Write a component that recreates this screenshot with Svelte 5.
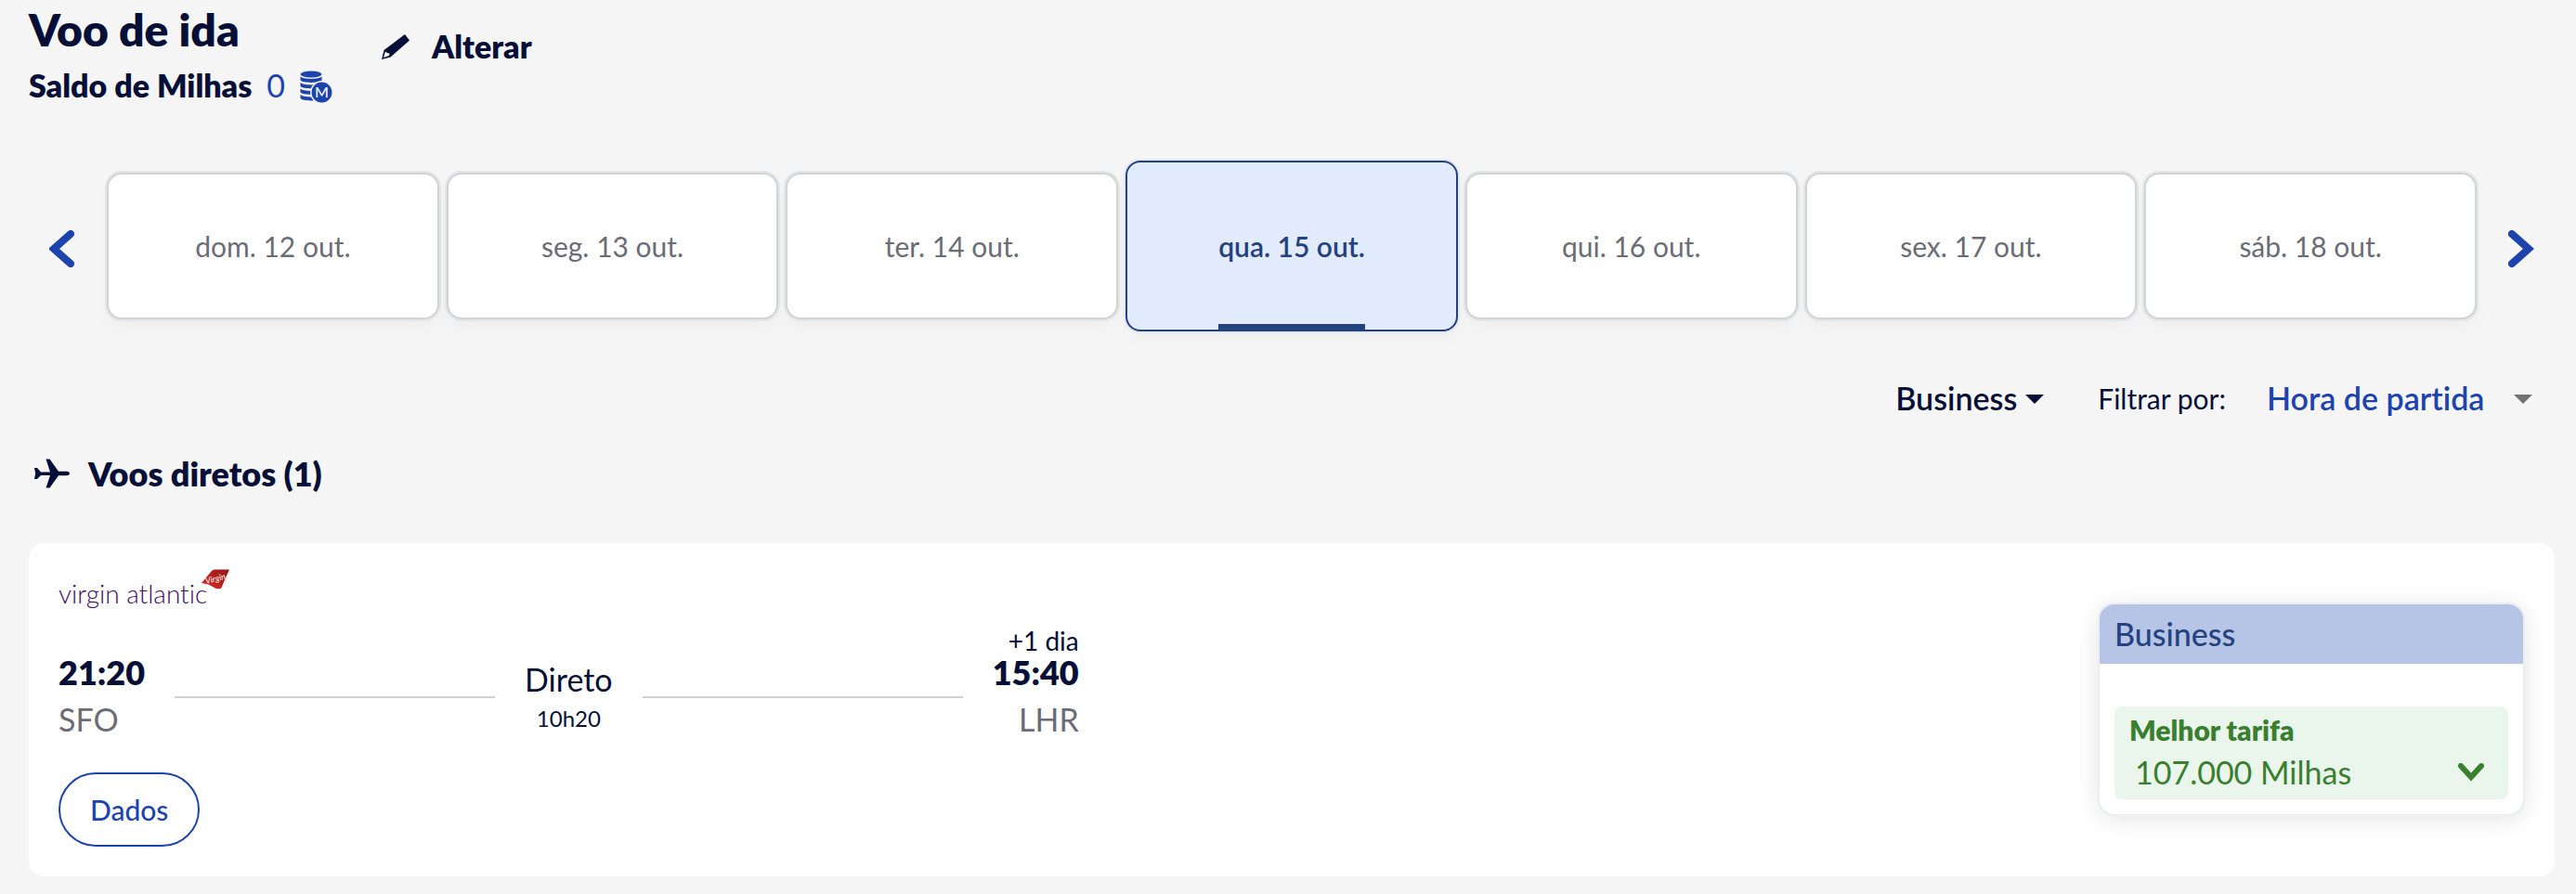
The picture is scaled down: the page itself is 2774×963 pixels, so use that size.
<script>
  const days = ['dom. 12 out.', 'seg. 13 out.', 'ter. 14 out.', 'qua. 15 out.', 'qui. 16 out.', 'sex. 17 out.', 'sáb. 18 out.'];

  let selected = $state(3);

  const flight = {
    departure: '21:20',
    origin: 'SFO',
    arrival: '15:40',
    destination: 'LHR',
    extraDays: '+1 dia',
    stops: 'Direto',
    duration: '10h20'
  };

  function move(step) {
    selected = Math.min(days.length - 1, Math.max(0, selected + step));
  }
</script>

{#snippet caret()}
  <svg class="caret" viewBox="0 0 20 10" width="20" height="10" aria-hidden="true">
    <path d="M0 0h20L10 10z" fill="currentColor" />
  </svg>
{/snippet}

<main>
  <header>
    <div class="heading">
      <h1>Voo de ida</h1>
      <p class="balance">
        <span>Saldo de Milhas</span>
        <span class="miles">0</span>
        <svg viewBox="0 0 36 36" width="36" height="36" aria-hidden="true">
          <g fill="#1d43ad">
            <ellipse cx="12" cy="4" rx="11.5" ry="3.5" />
            <path d="M0.5 6.5c3 3.2 20 3.2 23 0v4c-3 3.2-20 3.2-23 0z" />
            <path d="M0.5 13c3 3.2 20 3.2 23 0v4c-3 3.2-20 3.2-23 0z" />
            <path d="M0.5 19.5c3 3.2 20 3.2 23 0v4c-3 3.2-20 3.2-23 0z" />
            <path d="M0.5 26c3 3.2 20 3.2 23 0v4c-3 3.2-20 3.2-23 0z" />
          </g>
          <circle cx="23.5" cy="23.5" r="11.7" fill="#1d43ad" stroke="#f5f5f5" stroke-width="1.5" />
          <text x="23.5" y="29" text-anchor="middle" font-size="16" fill="#fff">M</text>
        </svg>
      </p>
    </div>
    <button class="edit">
      <svg viewBox="0 0 30 27" width="30" height="27" aria-hidden="true">
        <path fill="#050f37" fill-rule="evenodd" d="M25 0l5 6.5L9.5 24.5 0 27l2.5-10zM4 18.5L2 25l6-2 .5-2.5-2.5-.5z" />
      </svg>
      Alterar
    </button>
  </header>

  <nav class="dates" aria-label="Datas">
    <button class="arrow prev" aria-label="Dias anteriores" onclick={() => move(-1)}>
      <svg viewBox="0 0 28 40" width="28" height="40" aria-hidden="true">
        <path d="M23 4L5 20l18 16" />
      </svg>
    </button>
    <div class="days">
      {#each days as day, i}
        <button class="day" class:active={i === selected} onclick={() => (selected = i)}>
          <span>{day}</span>
        </button>
      {/each}
    </div>
    <button class="arrow next" aria-label="Próximos dias" onclick={() => move(1)}>
      <svg viewBox="0 0 28 40" width="28" height="40" aria-hidden="true">
        <path d="M4 4l18 16L4 36" />
      </svg>
    </button>
  </nav>

  <div class="filters">
    <div class="select">
      <select aria-label="Cabine">
        <option>Business</option>
      </select>
      {@render caret()}
    </div>
    <label for="sort">Filtrar por:</label>
    <div class="select sort">
      <select id="sort">
        <option>Hora de partida</option>
      </select>
      {@render caret()}
    </div>
  </div>

  <h2>
    <svg viewBox="0 0 38 32" width="38" height="32" aria-hidden="true">
      <path fill="#050f37" d="M0 10h3l4 4.5h10L12.5 0.5h4L26 13.8h8.5q3.5.2 3.5 2.2t-3.5 2.2H26L16.5 31.5h-4L17 18H7L3 22H0l1.2-6z" />
    </svg>
    Voos diretos (1)
  </h2>

  <article class="flight">
    <div class="details">
      <svg class="airline" viewBox="0 0 186 46" width="186" height="46" role="img" aria-label="Virgin Atlantic">
        <defs>
          <linearGradient id="tail" x1="0" y1="1" x2="1" y2="0">
            <stop offset="0" stop-color="#e02a24" />
            <stop offset="1" stop-color="#8f1a1c" />
          </linearGradient>
        </defs>
        <text class="wordmark" x="0" y="37">virgin atlantic</text>
        <path d="M154 15L165 2q1-1.5 3-1.5h16L175 21q-5 1-9-2t-12-4z" fill="url(#tail)" />
        <text class="script" x="159" y="16" transform="rotate(-14 159 16)">Virgin</text>
      </svg>

      <div class="route">
        <span class="extra">{flight.extraDays}</span>
        <div class="point start">
          <strong>{flight.departure}</strong>
          <span>{flight.origin}</span>
        </div>
        <hr />
        <div class="stops">
          <span>{flight.stops}</span>
          <small>{flight.duration}</small>
        </div>
        <hr />
        <div class="point end">
          <strong>{flight.arrival}</strong>
          <span>{flight.destination}</span>
        </div>
      </div>

      <button class="more">Dados</button>
    </div>

    <section class="fare">
      <h3>Business</h3>
      <button class="best">
        <strong>Melhor tarifa</strong>
        <span class="price">
          107.000 Milhas
          <svg viewBox="0 0 28 20" width="28" height="20" aria-hidden="true">
            <path d="M3 3l11 12L25 3" />
          </svg>
        </span>
      </button>
    </section>
  </article>
</main>

<style>
  :global(body) {
    background: #f5f5f5;
  }

  main {
    padding: 4px 23px 19px 31px;
    color: #050f37;
    font-family: Lato, 'Open Sans', sans-serif;
    font-size: 34px;
    line-height: 40px;
    font-variant-ligatures: none;
  }

  h1,
  h2,
  h3,
  p {
    margin: 0;
  }

  svg {
    flex: none;
  }

  button,
  select {
    margin: 0;
    padding: 0;
    border: 0;
    background: none;
    color: inherit;
    font: inherit;
    cursor: pointer;
  }

  header {
    display: flex;
    align-items: flex-start;
    gap: 52px;
  }

  h1 {
    margin-bottom: 12px;
    font-size: 48px;
    line-height: 56px;
    font-weight: 800;
  }

  .balance {
    display: flex;
    align-items: flex-end;
    gap: 16px;
    font-weight: 800;
  }

  .miles {
    color: #1d43ad;
    font-weight: 400;
  }

  .balance text {
    font-weight: 500;
  }

  .edit {
    display: flex;
    align-items: center;
    gap: 24px;
    margin-top: 26px;
    font-weight: 800;
  }

  .dates {
    display: flex;
    align-items: center;
    margin-top: 61px;
  }

  .arrow {
    display: flex;
    justify-content: center;
    width: 84px;
    padding-top: 6px;
  }

  .arrow path,
  .price path {
    fill: none;
    stroke: #1d43ad;
    stroke-width: 8;
    stroke-linecap: round;
  }

  .prev {
    padding-right: 12px;
  }

  .next {
    padding-left: 12px;
  }

  .days {
    display: grid;
    grid-template-columns: repeat(7, 1fr);
    align-items: center;
    gap: 8px;
    flex: 1;
    height: 184px;
  }

  .day {
    height: 158px;
    border: 2px solid #d2d3d5;
    border-radius: 16px;
    background: #fff;
    box-shadow: 0 0 0 2px #e4e5e7, 0 8px 16px rgba(0, 0, 0, 0.03);
    color: #6b6c75;
    font-size: 30px;
  }

  .day.active {
    display: flex;
    justify-content: center;
    height: 100%;
    border-color: #24427f;
    background: #e2ebfb;
    box-shadow: 0 0 0 2px #e2e8f4, 0 8px 16px rgba(0, 0, 0, 0.03);
    color: #24427f;
    font-weight: 600;
  }

  .active span {
    display: flex;
    align-items: center;
    height: 100%;
    box-sizing: border-box;
    padding-top: 6px;
    border-bottom: 6px solid #24427f;
  }

  .filters {
    display: flex;
    justify-content: flex-end;
    align-items: center;
    margin-top: 52px;
    padding-right: 24px;
  }

  .filters label {
    margin: 0 44px 0 58px;
    font-size: 30px;
  }

  .select {
    position: relative;
    font-weight: 600;
  }

  select {
    appearance: none;
    padding-right: 28px;
  }

  .caret {
    position: absolute;
    top: 16px;
    right: 0;
    pointer-events: none;
  }

  .sort {
    color: #1d43ad;
  }

  .sort select {
    padding-right: 51px;
  }

  .sort .caret {
    color: #737373;
  }

  h2 {
    display: flex;
    align-items: center;
    gap: 20px;
    margin: 41px 0 55px;
    padding-left: 6px;
    font-size: 36px;
    font-weight: 800;
  }

  .flight {
    display: flex;
    justify-content: space-between;
    align-items: center;
    padding: 28px 34px 32px 32px;
    border-radius: 16px;
    background: #fff;
  }

  .details {
    width: 41.4%;
  }

  .airline {
    display: block;
  }

  .wordmark {
    fill: #3f0a5e;
    font-size: 28px;
    font-weight: 300;
  }

  .script {
    fill: #fff;
    font-size: 9px;
    font-style: italic;
  }

  .route {
    display: grid;
    grid-template-columns: auto 1fr auto 1fr auto;
    align-items: center;
    column-gap: 32px;
    margin: 15px 0 37px;
  }

  .extra {
    grid-column: 4 / 6;
    font-size: 28px;
    line-height: 32px;
    text-align: right;
  }

  .point {
    display: flex;
    flex-direction: column;
    gap: 13px;
    color: #6b6c75;
  }

  .start {
    grid-column: 1;
  }

  .point strong {
    color: #050f37;
    font-size: 36px;
    line-height: 36px;
    font-weight: 800;
  }

  .end {
    text-align: right;
  }

  .stops {
    display: flex;
    flex-direction: column;
    align-items: center;
    gap: 6px;
  }

  .stops small {
    font-size: 24px;
    line-height: 32px;
  }

  hr {
    width: 100%;
    height: 2px;
    margin: 0;
    border: 0;
    background: #cfcfd1;
  }

  .more {
    height: 80px;
    padding: 0 32px;
    border: 2px solid #1d43ad;
    border-radius: 40px;
    color: #1d43ad;
    font-size: 30px;
    font-weight: 500;
  }

  .fare {
    width: 456px;
    margin-top: 2px;
    border-radius: 16px;
    box-shadow: 0 0 0 2px #ebedf1, 0 4px 28px rgba(0, 0, 0, 0.12);
    overflow: hidden;
  }

  h3 {
    padding: 12px 16px;
    background: #b6c5e6;
    color: #24427f;
    font-size: 34px;
    font-weight: 500;
  }

  .best {
    display: flex;
    flex-direction: column;
    gap: 10px;
    width: calc(100% - 32px);
    margin: 46px 16px 16px;
    padding: 9px 26px 9px 16px;
    border-radius: 8px;
    background: #eaf6ec;
    color: #3a7f30;
    text-align: left;
  }

  .best strong {
    font-size: 30px;
    line-height: 32px;
    font-weight: 800;
  }

  .price {
    display: flex;
    justify-content: space-between;
    align-items: center;
    align-self: stretch;
    padding-left: 6px;
    font-weight: 400;
  }

  .price path {
    stroke: #3a7f30;
    stroke-width: 6;
  }
</style>
